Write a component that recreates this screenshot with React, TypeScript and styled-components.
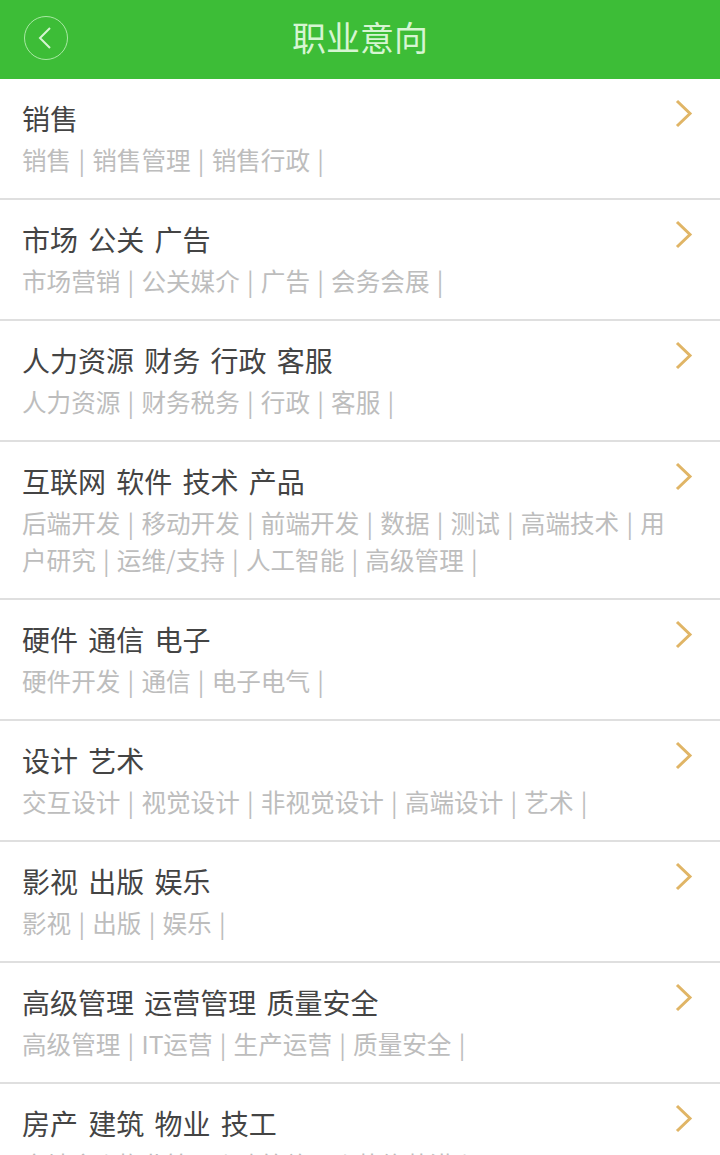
import React from "react";
import styled, { createGlobalStyle } from "styled-components";

const GlobalStyle = createGlobalStyle`
  html, body {
    margin: 0;
    padding: 0;
    background: #ffffff;
    font-family: "Noto Sans CJK SC", "Liberation Sans", sans-serif;
  }
`;

const Page = styled.div`
  width: 720px;
  height: 1155px;
  overflow: hidden;
  background: #ffffff;
`;

const Header = styled.div`
  height: 79px;
  background: #3dbd37;
  position: relative;
  display: flex;
  align-items: center;
  justify-content: center;
`;

const BackButton = styled.div`
  position: absolute;
  left: 24px;
  top: 16px;
  width: 44px;
  height: 44px;
  box-sizing: border-box;
  border: 1.5px solid #a9e9a4;
  border-radius: 50%;
  display: flex;
  align-items: center;
  justify-content: center;
`;

const Title = styled.div`
  font-size: 34px;
  line-height: 79px;
  color: #d6f5d2;
  margin-top: -6px;
`;

const Row = styled.div`
  position: relative;
  box-sizing: border-box;
  padding: 18px 0 0 22px;
  height: 121px;
  border-bottom: 2px solid #dfdfdf;
  &:last-child {
    border-bottom: none;
  }
  &.tall {
    height: 158px;
  }
`;

const RowTitle = styled.div`
  font-size: 28px;
  line-height: 42px;
  color: #444444;
  word-spacing: 4px;
`;

const RowSub = styled.div`
  font-size: 24.6px;
  line-height: 37px;
  color: #bdbdbd;
  width: 660px;
  word-spacing: 1.7px;
  margin-top: 2px;
`;

const Arrow = styled.svg`
  position: absolute;
  right: 27px;
  top: 20px;
`;

const Chevron = () => (
  <Arrow width="18" height="30" viewBox="0 0 18 30" fill="none">
    <path d="M2 2 L15 14.5 L2 27" stroke="#e0b566" strokeWidth="3" />
  </Arrow>
);

const rows = [
  { title: "销售", sub: "销售 | 销售管理 | 销售行政 |" },
  { title: "市场 公关 广告", sub: "市场营销 | 公关媒介 | 广告 | 会务会展 |" },
  { title: "人力资源 财务 行政 客服", sub: "人力资源 | 财务税务 | 行政 | 客服 |" },
  {
    title: "互联网 软件 技术 产品",
    sub: "后端开发 | 移动开发 | 前端开发 | 数据 | 测试 | 高端技术 | 用户研究 | 运维/支持 | 人工智能 | 高级管理 |",
    tall: true,
  },
  { title: "硬件 通信 电子", sub: "硬件开发 | 通信 | 电子电气 |" },
  { title: "设计 艺术", sub: "交互设计 | 视觉设计 | 非视觉设计 | 高端设计 | 艺术 |" },
  { title: "影视 出版 娱乐", sub: "影视 | 出版 | 娱乐 |" },
  { title: "高级管理 运营管理 质量安全", sub: "高级管理 | IT运营 | 生产运营 | 质量安全 |" },
  { title: "房产 建筑 物业 技工", sub: "房地产 | 物业管理 | 建筑施工 | 装修装潢 |" },
];

const App = () => {
  return (
    <Page>
      <GlobalStyle />
      <Header>
        <BackButton>
          <svg width="16" height="24" viewBox="0 0 16 24" fill="none">
            <path d="M12 2 L2 12 L12 22" stroke="#d6f5d2" strokeWidth="2" />
          </svg>
        </BackButton>
        <Title>职业意向</Title>
      </Header>
      {rows.map((row) => (
        <Row key={row.title} className={row.tall ? "tall" : ""}>
          <RowTitle>{row.title}</RowTitle>
          <RowSub>{row.sub}</RowSub>
          <Chevron />
        </Row>
      ))}
    </Page>
  );
};

export default App;
